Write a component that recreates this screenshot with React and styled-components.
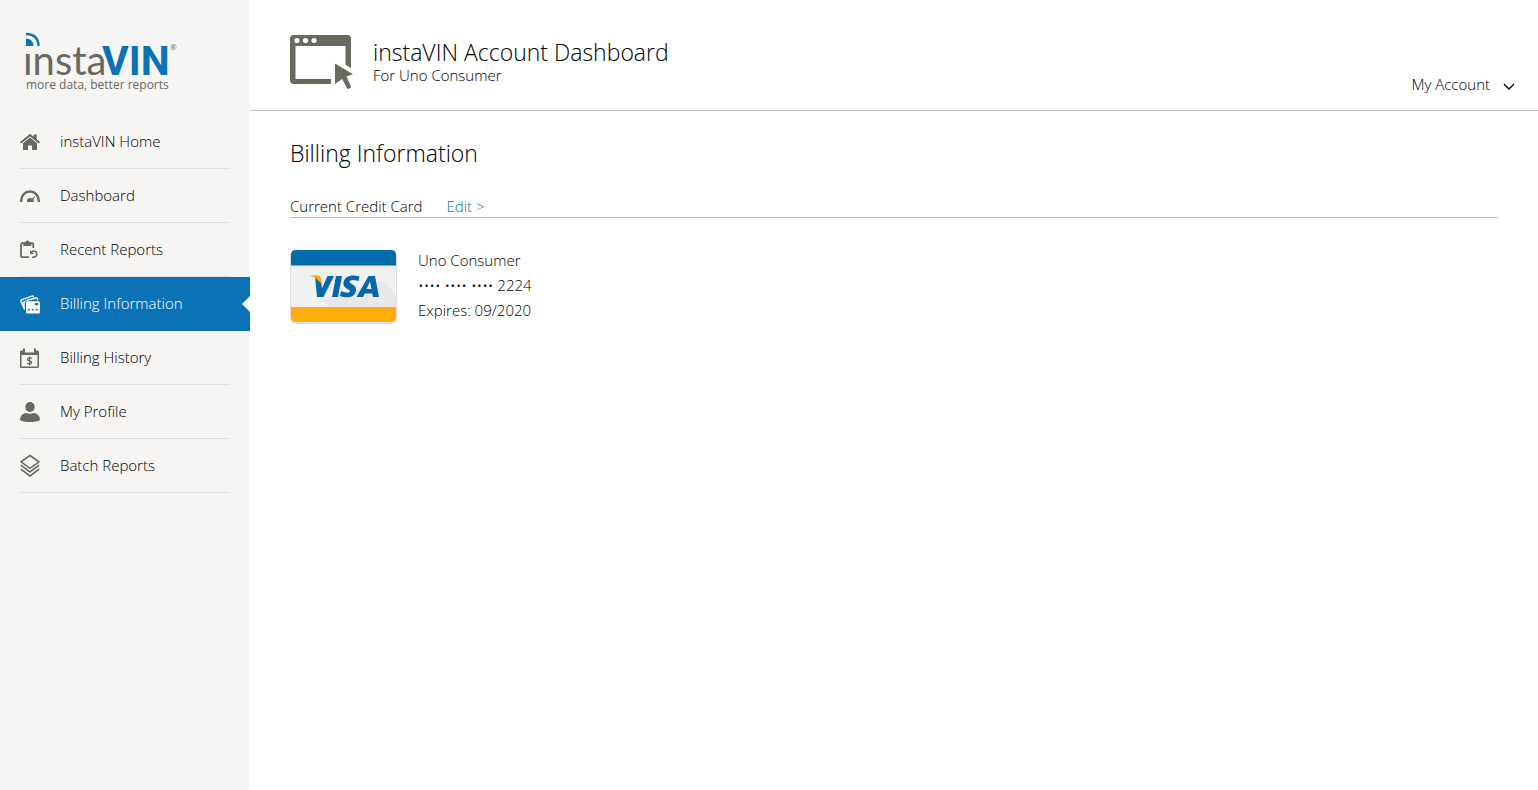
import React from "react";
import styled, { createGlobalStyle } from "styled-components";

const GlobalStyle = createGlobalStyle`
  * { box-sizing: border-box; }
  body {
    margin: 0;
    background: #fff;
    color: #000;
    font: 300 15px/25px "Open Sans", "Noto Sans", sans-serif;
  }
  a { color: inherit; text-decoration: none; }
`;

const grey = "#6a6960";
const blue = "#0c72b6";

const Page = styled.div`
  display: flex;
  min-height: 100vh;
`;

const Sidebar = styled.aside`
  flex: 0 0 250px;
  background: #f6f5f3;
`;

const LogoLink = styled.a`
  display: block;
  height: 115px;
  padding: 28px 0 0 20px;
  svg { display: block; }
`;

const NavList = styled.ul`
  list-style: none;
  margin: 0;
  padding: 0;
`;

const NavLink = styled.a`
  position: relative;
  display: flex;
  align-items: center;
  height: 54px;
  margin: 0 ${(p) => (p.$active ? "0" : "20px")};
  padding: 0 ${(p) => (p.$active ? "20px" : "0")};
  border-bottom: 1px solid ${(p) => (p.$active ? blue : "#e2e1df")};
  background: ${(p) => (p.$active ? blue : "transparent")};
  && { color: ${(p) => (p.$active ? "#fff" : "#000")}; }

  svg {
    flex: none;
    margin-right: 20px;
    color: ${(p) => (p.$active ? "#fff" : grey)};
  }

  &::after {
    content: ${(p) => (p.$active ? '""' : "none")};
    position: absolute;
    right: 0;
    top: 19px;
    border: 8px solid transparent;
    border-left-width: 0;
    border-right-color: #fff;
  }
`;

const Main = styled.div`
  flex: 1;
  min-width: 0;
`;

const Header = styled.header`
  display: flex;
  justify-content: space-between;
  align-items: flex-end;
  height: 111px;
  padding: 0 20px 13px 40px;
  border-bottom: 1px solid #c4c4bb;
`;

const Heading = styled.div`
  display: flex;
  align-items: flex-start;
  gap: 20px;
  padding-bottom: 7px;
`;

const HeadingText = styled.div`
  padding-top: 3px;
`;

const Title = styled.h1`
  margin: 0;
  font-size: 23px;
  font-weight: 300;
  line-height: 28px;
`;

const Subtitle = styled.p`
  margin: 0;
  line-height: 18px;
`;

const AccountButton = styled.button`
  display: flex;
  align-items: center;
  gap: 10px;
  padding: 0;
  border: 0;
  background: none;
  color: inherit;
  font: inherit;
  cursor: pointer;
`;

const Content = styled.main`
  padding: 26px 40px;
`;

const SectionTitle = styled.h2`
  margin: 0 0 28px;
  font-size: 23px;
  font-weight: 300;
  line-height: 32px;
`;

const CardHeader = styled.div`
  display: flex;
  gap: 24px;
  margin-bottom: 30px;
  padding-bottom: 1px;
  border-bottom: 1px solid #bfbfbf;
  line-height: 19px;
`;

const CardTitle = styled.h3`
  margin: 0;
  font-size: 15px;
  font-weight: 300;
`;

const EditLink = styled.a`
  && { color: ${blue}; }
`;

const CardRow = styled.div`
  display: flex;
  gap: 20px;
  svg { flex: none; }
`;

const CardDetails = styled.div`
  p { margin: 0; }
`;

const Icon = ({ children, width = 20, height = 24 }) => (
  <svg width={width} height={height} viewBox={`0 0 ${width} ${height}`} fill="currentColor" aria-hidden="true">
    {children}
  </svg>
);

const HomeIcon = () => (
  <Icon>
    <path d="M0 12 10 3.8l3.7 3V4.5h3v4.8L20 12l-1.2 1.5L10 6.4l-8.8 7.1z" />
    <path d="M3 13.3 10 7.6l7 5.7V20h-5v-4.5H8V20H3z" />
  </Icon>
);

const GaugeIcon = () => (
  <Icon>
    <path d="M1.2 18v-1.7a8.8 8.8 0 0 1 17.6 0V18" fill="none" stroke="currentColor" strokeWidth="2.4" />
    <path d="M7 18c-.3-2.400 1-4 3.200-4 .8 0 1.500.2 2 .5L15.600 11.200 13.600 15.500c.300.700.300 1.600 0 2.500z" />
  </Icon>
);

const ReportIcon = () => (
  <Icon>
    <path d="M9 19.200H2.500Q1 19.200 1 17.700V6.500Q1 5.200 2.500 5.200h9.500q1.300 0 1.300 1.300V10" fill="none" stroke="currentColor" strokeWidth="1.800" />
    <path d="M3.300 4.500h2a2 2 0 0 1 4 0h2V8h-8z" />
    <path d="M11.500 14.200q2-2 4-.7 2.200 1.700.8 4.200-1.300 1.800-4.300 1.500" fill="none" stroke="currentColor" strokeWidth="1.600" />
    <path d="M10 12v4h4z" />
  </Icon>
);

const CardsIcon = () => (
  <Icon>
    <path d="M4.500 17.500.9 9.300Q.5 8.200 1.500 7.800L12 4q1-.3 1.300.7l.4.9" fill="none" stroke="currentColor" strokeWidth="1.300" />
    <path d="M1.500 10.300 6 8.500 5.500 10Q4.500 10 4.600 11.500l.4 6-1-.8z" />
    <path d="M6.700 9.200Q6.700 8.300 7.700 8L16 6q1.200-.3 1.500.8l.4 1.500" fill="none" stroke="currentColor" strokeWidth="1.300" />
    <path fillRule="evenodd" d="M7.500 9.300H18.500Q20 9.300 20 10.800v9.200q0 1.500-1.500 1.500h-11Q6 21.500 6 20v-9.200q0-1.500 1.500-1.500zM14.800 11v2.200h3.400V11zM7.700 17v1.600h2V17zm4 0v1.600h2V17zm4 0v1.600h2V17z" />
  </Icon>
);

const CalendarIcon = () => (
  <Icon>
    <path fillRule="evenodd" d="M1.500 4.500H3V2.500h2V6.500h9V2.500h2v2h1.500Q19 4.500 19 6v14.500q0 1.500-1.500 1.500h-16Q0 22 0 20.500V6q0-1.500 1.500-1.500zM1.500 9v11.500h16V9z" />
    <path d="M12 12.500Q9.500 11 8 12.300c-1.200 1.400 0 2.300 1.500 2.600 1.700.4 2.700 1 1.700 2.500Q9.500 18.700 7 17.300M9.600 10.500v9" fill="none" stroke="currentColor" strokeWidth="1.300" />
  </Icon>
);

const ProfileIcon = () => (
  <Icon>
    <ellipse cx="10" cy="7" rx="4.700" ry="5" />
    <path d="M0 20c0-4 2.500-6.500 6-7q4 1.500 8 0c3.500.5 6 3 6 7q-3 2-10 2t-10-2z" />
  </Icon>
);

const LayersIcon = () => (
  <Icon>
    <g fill="none" stroke="currentColor" strokeWidth="1.600">
      <path d="M10 1.500 19 7.800 10 14.300 1 7.800z" />
      <path d="m.8 11.200 9.200 6.700 9.200-6.700M.8 15.200 10 22l9.200-6.800" />
    </g>
  </Icon>
);

const WindowIcon = () => (
  <svg width="63" height="55" viewBox="0 0 63 55" fill={grey} aria-hidden="true">
    <path fillRule="evenodd" d="M4 0h53q4 0 4 4v29l-5.500-3.300V11H5.500v33H41v5H4q-4 0-4-4V4q0-4 4-4z" />
    <g fill="#fff">
      <circle cx="7" cy="5.500" r="2.600" />
      <circle cx="15.500" cy="5.500" r="2.600" />
      <circle cx="24" cy="5.500" r="2.600" />
    </g>
    <path d="M45 28.500 63 39.300 56.500 41.500 61 51.500q.2 1.500-2 2.200-1.500.5-2-.7L52 44l-7 5z" />
  </svg>
);

const Logo = () => (
  <svg width="160" height="68" viewBox="0 0 160 68" role="img" aria-label="instaVIN – more data, better reports">
    <g fill={blue}>
      <path d="M6 18v-7.500q7 0 7.500 7.500z" />
      <path d="M6 6q12.500.5 12.500 12" fill="none" stroke={blue} strokeWidth="2.400" />
    </g>
    <text x="3" y="47" fill={grey} fontSize="40" fontWeight="400" fontFamily="Lato, sans-serif">ınsta</text>
    <text x="82" y="47" fill={blue} fontSize="41" fontWeight="700" fontFamily="Roboto, sans-serif">VIN</text>
    <text x="150" y="22" fill={grey} fontSize="8" fontWeight="400">®</text>
    <text x="6" y="61" fill={grey} fontSize="12" fontWeight="400">more data, better reports</text>
  </svg>
);

const VisaCard = () => (
  <svg width="108" height="76" viewBox="0 -2 108 76" role="img" aria-label="Visa">
    <rect x="0" y="0" width="107" height="74" rx="6" fill="#deddda" />
    <rect x="1" y="0" width="105" height="73" rx="5" fill="#f2f1f1" />
    <path d="M31 49 93 31l13 14v13H40z" fill="#e9e8e8" />
    <path d="M1 15.500V5q0-5 5-5h95q5 0 5 5v10.500z" fill="#026ba9" />
    <path d="M1 57v10q0 5 5 5h95q5 0 5-5V57z" fill="#ffae08" />
    <g fill="#0668a8" transform="translate(0 -2)">
      <path d="M25 27.500 27 49h6.500L44 28h-6.500L32 40.500 30.500 31Q29 28 25 27.500z" />
      <path d="M46 28h6l-4 21h-6z" />
      <path d="M69.500 28.500 68.500 33Q60 30.500 59.500 34c0 2 7.500 2.500 6.500 8.500C65 50 56.500 50.500 50 48l1-5q8 3.500 9 .3c0-2.300-7-2.600-6.500-8.300C54.500 27.500 62 26.500 69.500 28.500z" />
      <path fillRule="evenodd" d="M78.500 28H85l4 21h-6l-.7-3.500h-7.500L73 49h-6.500zM80 33.500 76.500 41h5z" />
    </g>
    <path d="M19 25.500h8q3.500 0 4 3l1.500 8.500Q29 27.500 19 25.500z" fill="#f9a91a" />
  </svg>
);

const items = [
  { label: "instaVIN Home", icon: HomeIcon },
  { label: "Dashboard", icon: GaugeIcon },
  { label: "Recent Reports", icon: ReportIcon },
  { label: "Billing Information", icon: CardsIcon, active: true },
  { label: "Billing History", icon: CalendarIcon },
  { label: "My Profile", icon: ProfileIcon },
  { label: "Batch Reports", icon: LayersIcon },
];

export default function App() {
  return (
    <Page>
      <GlobalStyle />
      <Sidebar>
        <LogoLink href="#home"><Logo /></LogoLink>
        <nav>
          <NavList>
            {items.map(({ label, icon: ItemIcon, active }) => (
              <li key={label}>
                <NavLink href="#" $active={active} aria-current={active ? "page" : undefined}>
                  <ItemIcon />
                  {label}
                </NavLink>
              </li>
            ))}
          </NavList>
        </nav>
      </Sidebar>
      <Main>
        <Header>
          <Heading>
            <WindowIcon />
            <HeadingText>
              <Title>instaVIN Account Dashboard</Title>
              <Subtitle>For Uno Consumer</Subtitle>
            </HeadingText>
          </Heading>
          <AccountButton type="button">
            My Account
            <svg width="18" height="18" viewBox="0 0 18 18" fill="none" stroke="#000" strokeWidth="1.300" aria-hidden="true">
              <path d="m4 8 5 5 5-5" />
            </svg>
          </AccountButton>
        </Header>
        <Content>
          <SectionTitle>Billing Information</SectionTitle>
          <CardHeader>
            <CardTitle>Current Credit Card</CardTitle>
            <EditLink href="#edit">Edit &gt;</EditLink>
          </CardHeader>
          <CardRow>
            <VisaCard />
            <CardDetails>
              <p>Uno Consumer</p>
              <p>•••• •••• •••• 2224</p>
              <p>Expires: 09/2020</p>
            </CardDetails>
          </CardRow>
        </Content>
      </Main>
    </Page>
  );
}
